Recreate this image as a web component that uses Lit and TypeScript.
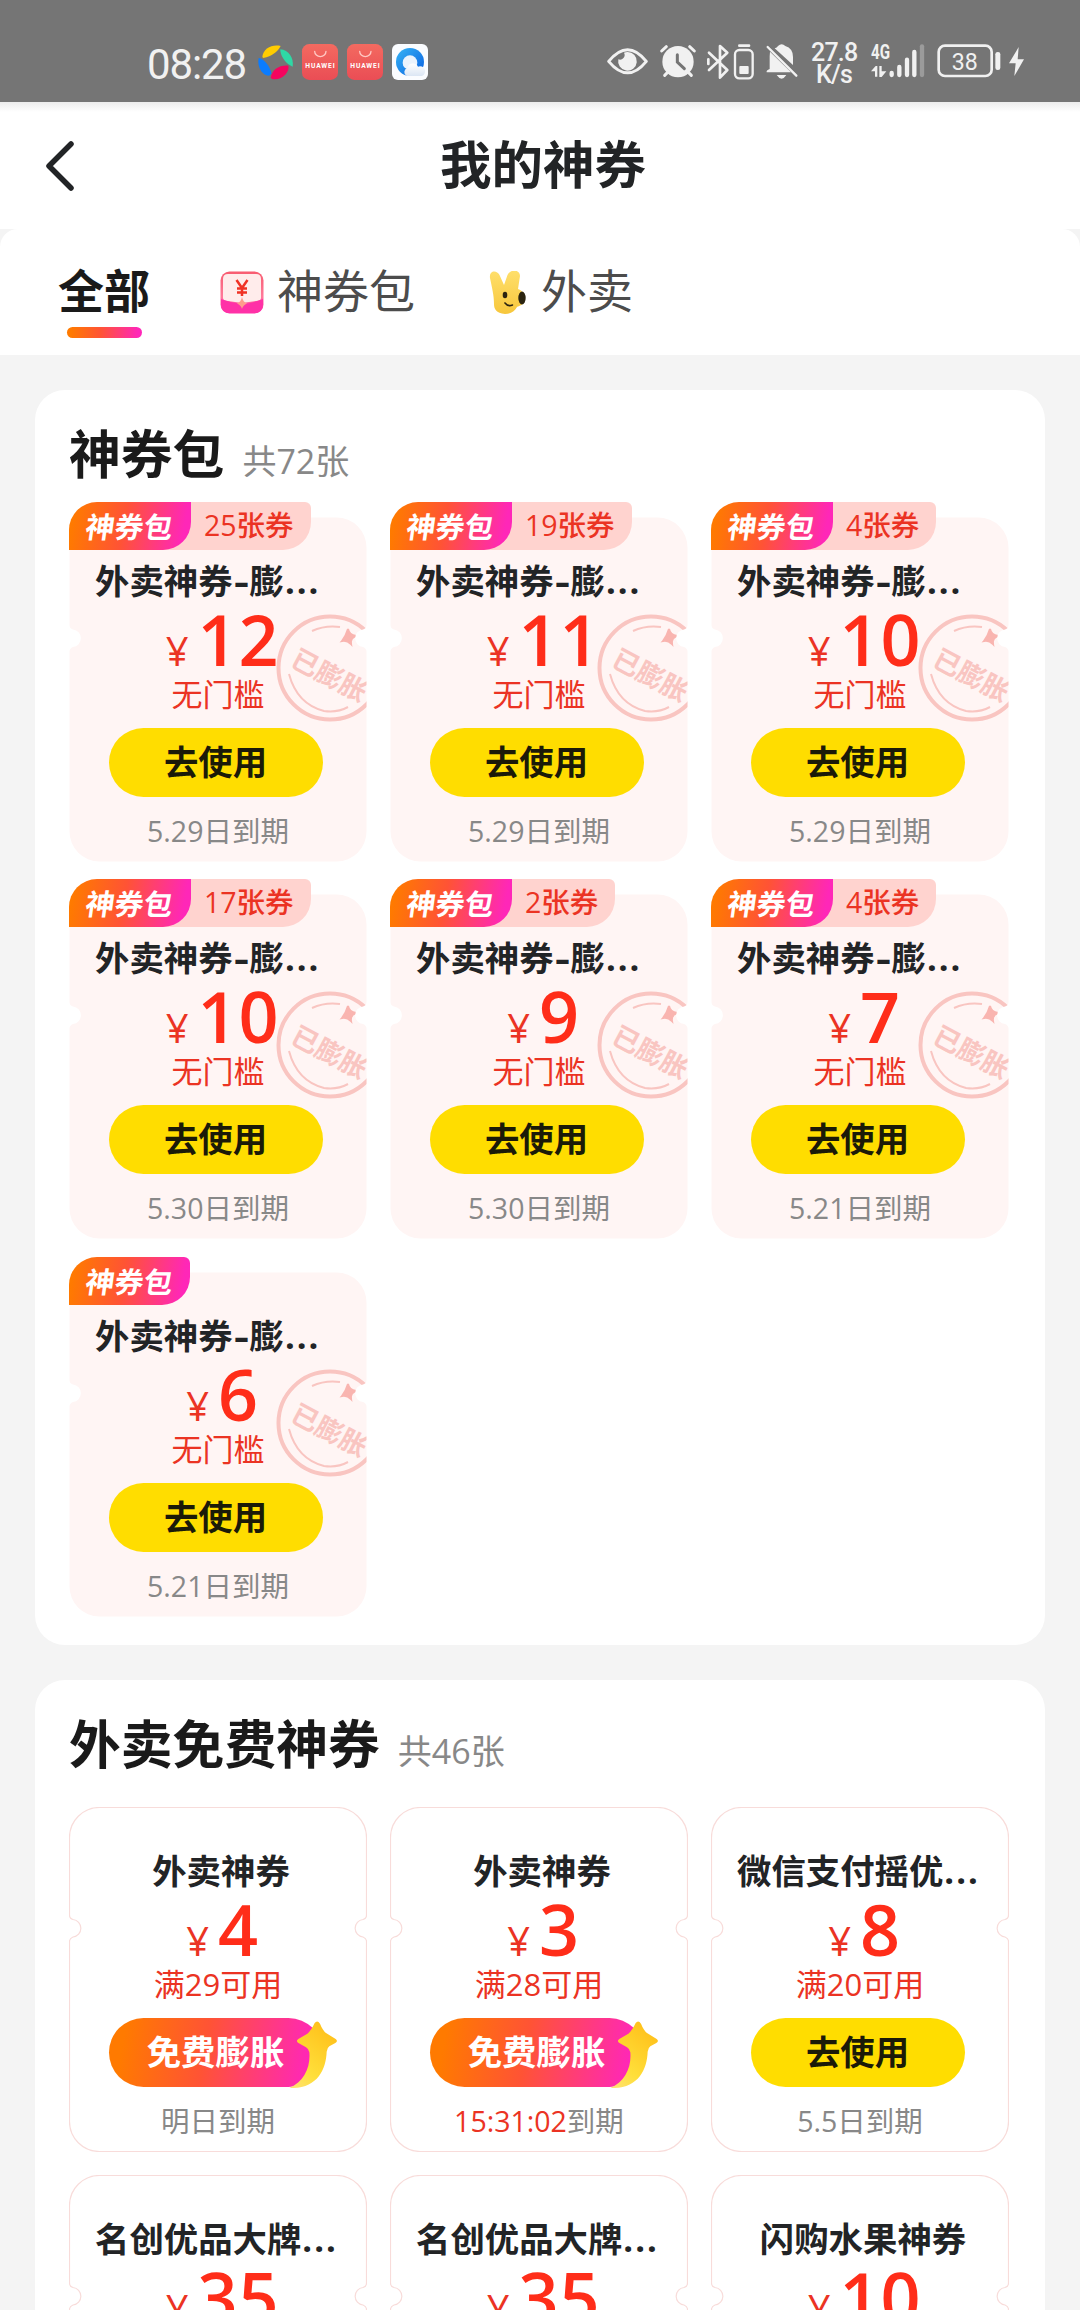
import { LitElement, html, svg, css, nothing } from "lit";
import { customElement, property } from "lit/decorators.js";

interface Coupon {
  title: string;
  price: string;
  condition?: string;
  action?: "use" | "boost";
  countdown?: string;
  expiry?: string;
  pack?: boolean;
  count?: string;
}

const pack = (price: string, day: string, count?: string): Coupon => ({
  title: "外卖神券-膨...",
  price,
  condition: "无门槛",
  action: "use",
  expiry: day + "日到期",
  pack: true,
  count,
});

const PACKS: Coupon[] = [
  pack("12", "5.29", "25张券"),
  pack("11", "5.29", "19张券"),
  pack("10", "5.29", "4张券"),
  pack("10", "5.30", "17张券"),
  pack("9", "5.30", "2张券"),
  pack("7", "5.21", "4张券"),
  pack("6", "5.21"),
];

const FREE: Coupon[] = [
  { title: "外卖神券", price: "4", condition: "满29可用", action: "boost", expiry: "明日到期" },
  { title: "外卖神券", price: "3", condition: "满28可用", action: "boost", countdown: "15:31:02", expiry: "到期" },
  { title: "微信支付摇优...", price: "8", condition: "满20可用", action: "use", expiry: "5.5日到期" },
  { title: "名创优品大牌...", price: "35" },
  { title: "名创优品大牌...", price: "35" },
  { title: "闪购水果神券", price: "10" },
];

const TICKET =
  "M30.5 .5H267.5A30 30 0 0 1 297.5 30.5V108Q297.5 111.5 294 112.5A8.8 8.8 0 0 0 294 130Q297.5 131.5 297.5 134.5V314.5A30 30 0 0 1 267.5 344.5H30.5A30 30 0 0 1 .5 314.5V134.5Q.5 131.5 4 130A8.8 8.8 0 0 0 4 112.5Q.5 111.5 .5 108V30.5A30 30 0 0 1 30.5 .5Z";

@customElement("status-bar")
class StatusBar extends LitElement {
  static styles = css`
    :host {
      display: flex;
      height: 102px;
      box-sizing: border-box;
      background: #757575;
      color: #f1f1f1;
      font-family: Roboto, "Noto Sans CJK SC", sans-serif;
      padding: 42px 56px 0 147px;
      align-items: flex-start;
    }
    svg { display: block; flex: none; overflow: visible; }
    .time { font-size: 42px; line-height: 46px; width: 111px; letter-spacing: -1.1px; white-space: nowrap; }
    .apps { display: flex; gap: 9px; padding-top: 2px; }
    .system { display: flex; margin-left: auto; }
    .eye { margin: 5px 12px 0 0; }
    .alarm { margin: 2px 12px 0 0; }
    .bt { margin: 2px 5px 0 0; }
    .cell { margin: 2px 12px 0 0; }
    .bell { margin: 2px 14px 0 0; }
    .speed { width: 46px; margin-right: 14px; font-size: 25px; line-height: 22px; font-weight: 500; text-align: center; white-space: nowrap; letter-spacing: -0.8px; }
    .signal { margin: 2px 12px 0 0; }
    .battery { margin: 2px 8px 0 0; }
    .bolt { margin: 5px 0 0 0; }
    text { font-family: Roboto, sans-serif; }
  `;

  private bag() {
    return html`<svg width="36" height="36" viewBox="0 0 108 108">
      <defs><linearGradient id="r" x2="0" y2="1"><stop stop-color="#f36a60" /><stop offset="1" stop-color="#ea4d55" /></linearGradient></defs>
      <rect width="108" height="108" rx="22" fill="url(#r)" />
      <path d="M38 22a17 16 0 0 0 34 0" fill="none" stroke="#ffc7c2" stroke-width="4" stroke-linecap="round" />
      <text x="54" y="71" font-size="20" font-weight="700" fill="#fff" text-anchor="middle" textLength="88">HUAWEI</text>
    </svg>`;
  }

  render() {
    return html`
      <div class="time">08:28</div>
      <div class="apps">
        <svg width="35" height="36" viewBox="0 0 105 108">
          <path d="M13 39C15 14 42 0 68 6C58 24 42 37 16 42Z" fill="#fc0" />
          <path d="M67 16C92 18 108 42 104 68C86 60 70 42 67 20Z" fill="#2fd8a5" />
          <path d="M38 101C42 78 62 63 91 65C96 84 70 112 42 105Z" fill="#f5045e" />
          <path d="M2 42C16 44 36 64 40 88C36 100 20 96 10 82C2 70-1 56 2 42Z" fill="#0a7cff" />
        </svg>
        ${this.bag()} ${this.bag()}
        <svg width="36" height="36" viewBox="0 0 108 108">
          <defs>
            <linearGradient id="q" x2="1" y2="1"><stop stop-color="#35b4f5" /><stop offset="1" stop-color="#0a5fe0" /></linearGradient>
            <linearGradient id="c" x2="0" y2="1"><stop stop-color="#fff" /><stop offset="1" stop-color="#dbe6f4" /></linearGradient>
          </defs>
          <rect width="108" height="108" rx="18" fill="#fafcff" />
          <circle cx="54" cy="54" r="42" fill="url(#q)" />
          <circle cx="54" cy="56" r="22" fill="#eaf3fd" />
          <path d="M44 96a13 13 0 0 1 2-24a17 17 0 0 1 32-4a14 14 0 0 1 12 28Z" fill="url(#c)" />
        </svg>
      </div>
      <div class="system">
        <svg class="eye" width="41" height="28" viewBox="54 82 123 84">
          <path d="M59 125Q116 55 172 125Q116 194 59 125Z" fill="none" stroke="#f1f1f1" stroke-width="9" stroke-linejoin="round" />
          <path d="M116 97a28 28 0 1 1-28 22a14 14 0 0 0 17-20a28 28 0 0 1 11-2Z" fill="#f1f1f1" />
        </svg>
        <svg class="alarm" width="36" height="34" viewBox="212 74 108 102">
          <g stroke="#f1f1f1" stroke-width="9" stroke-linecap="round"><path d="M217 95l14-13M315 95l-14-13M226 168l14-14M306 168l-14-14" /></g>
          <circle cx="266" cy="127" r="47" fill="#f1f1f1" />
          <path d="M264 106v22l21 20" fill="none" stroke="#757575" stroke-width="9" stroke-linecap="round" />
        </svg>
        <svg class="bt" width="21" height="35" viewBox="354 72 63 105">
          <path d="M357 98L412 150L390 173V78L412 98L357 150M355 118v14" fill="none" stroke="#f1f1f1" stroke-width="8" stroke-linejoin="round" stroke-linecap="round" />
        </svg>
        <svg class="cell" width="20" height="36" viewBox="430 71 60 108">
          <path d="M446 76h29" stroke="#f1f1f1" stroke-width="8" stroke-linecap="round" />
          <rect x="433" y="89" width="53" height="85" rx="13" fill="none" stroke="#f1f1f1" stroke-width="7" />
          <rect x="446" y="137" width="28" height="24" rx="3" fill="#f1f1f1" />
        </svg>
        <svg class="bell" width="31" height="35" viewBox="525 73 93 105">
          <path d="M537 96L600 158H527Q525 152 536 148V110ZM551 86Q558 84 561 79Q572 69 583 79Q606 86 606 112V136ZM557 166H586Q572 188 557 166Z" fill="#f1f1f1" />
          <path d="M530 82L616 168" stroke="#f1f1f1" stroke-width="7" stroke-linecap="round" />
        </svg>
        <div class="speed">27.8<br />K/s</div>
        <svg class="signal" width="54" height="34" viewBox="842 74 162 102">
          <text x="842" y="119" font-size="60" font-weight="700" fill="#f1f1f1" textLength="57" lengthAdjust="spacingAndGlyphs">4G</text>
          <path d="M842 156L856 140H861V172H854V156ZM867 140H874V156H888L874 173H867Z" fill="#f1f1f1" />
          <g stroke="#f1f1f1" stroke-width="13" stroke-linecap="round"><path d="M904 161v6M927 143v24M950 121v46M972 98v69" /><path d="M995 81v86" stroke="#9b9b9b" /></g>
        </svg>
        <svg class="battery" width="64" height="34" viewBox="1040 74 192 102">
          <rect x="1045" y="79" width="159" height="91" rx="19" fill="none" stroke="#f1f1f1" stroke-width="8" />
          <rect x="1215" y="98" width="15" height="54" rx="7" fill="#f1f1f1" />
          <text x="1123" y="151" font-size="72" fill="#f1f1f1" text-anchor="middle" textLength="78" lengthAdjust="spacingAndGlyphs">38</text>
        </svg>
        <svg class="bolt" width="15" height="29" viewBox="1257 82 45 87">
          <path d="M1286 82L1257 131H1277L1273 169L1302 119H1283Z" fill="#f1f1f1" />
        </svg>
      </div>
    `;
  }
}

@customElement("coupon-card")
class CouponCard extends LitElement {
  @property({ attribute: false }) coupon!: Coupon;

  static styles = css`
    :host { display: block; position: relative; width: 298px; height: 345px; font-family: "Open Sans", "Noto Sans CJK SC", sans-serif; }
    .ticket { position: absolute; left: 0; top: 0; display: block; }
    .stamp { font-family: "Noto Sans CJK SC", sans-serif; font-size: 27px; font-weight: 700; fill: #f9c5c1; }
    .tags { position: absolute; left: 0; top: -15px; display: flex; height: 48px; line-height: 47px; white-space: nowrap; }
    .tag { position: relative; z-index: 1; width: 121px; box-sizing: border-box; padding-left: 17px; line-height: 46px; border-radius: 28px 6px 28px 0; background: linear-gradient(100deg, #ff7a00 5%, #ff5335 45%, #ff27b8 92%); color: #fff; font-family: "Noto Sans CJK SC", sans-serif; font-size: 29px; font-weight: 700; }
    .tag.joined { border-top-right-radius: 0; width: 122px; }
    .skew { display: inline-block; transform: skewX(-8deg); }
    .count { margin-left: -30px; padding: 0 17px 0 43px; border-radius: 0 6px 28px 0; background: #ffd3cf; color: #eb3323; font-size: 28.5px; font-weight: 500; }
    .body { position: relative; display: flex; flex-direction: column; align-items: center; padding-top: 44px; white-space: nowrap; }
    .title { width: 248px; box-sizing: border-box; height: 40px; line-height: 39px; font-size: 34.4px; font-weight: 700; color: #222426; text-align: center; padding-left: 6px; }
    .title.cut { text-align: left; padding-left: 1px; }
    .dots { letter-spacing: 2px; margin-left: 1px; }
    .dash { display: inline-block; width: 17px; text-align: center; transform: scaleX(1.35); }
    .price { display: flex; height: 76px; line-height: 76px; align-items: baseline; gap: 9px; margin-left: 9px; color: #ff2d19; font-weight: 650; font-size: 70px; }
    .amount { letter-spacing: 0.8px; }
    .yen { font-size: 40px; font-weight: 400; color: #eb3323; }
    .condition { height: 34px; line-height: 34px; font-size: 31px; color: #eb3323; }
    .button { position: relative; width: 214px; height: 69px; line-height: 68px; margin: 17px 5px 0 0; border-radius: 35px; background: #fd0; color: #1b1a08; text-align: center; font-size: 34.4px; font-weight: 700; }
    .boost { background: linear-gradient(100deg, #ff7a00 8%, #ff5335 45%, #ff27b8 92%); color: #fff; }
    .arrow { position: absolute; left: 180px; top: 3px; }
    .expiry { height: 40px; line-height: 40px; margin-top: 14px; font-size: 28.5px; color: #888; }
    .countdown { color: #eb3323; }
  `;

  private name(title: string) {
    const cut = title.endsWith("...");
    const [head, tail] = (cut ? title.slice(0, -3) : title).split("-");
    return html`<div class="title ${cut ? "cut" : ""}">${head}${tail ? html`<span class="dash">-</span>${tail}` : nothing}${cut ? html`<span class="dots">...</span>` : nothing}</div>`;
  }

  render() {
    const c = this.coupon;
    return html`
      <svg class="ticket" width="298" height="345" viewBox="0 0 298 345">
        ${c.pack
          ? svg`<clipPath id="t"><path d=${TICKET} /></clipPath>
            <path d=${TICKET} fill="#fff5f4" />
            <g clip-path="url(#t)" fill="none" stroke="#f9c5c1">
              <circle cx="261" cy="151" r="51.5" stroke-width="4" />
              <path d="M243 114Q256 108 271 110" stroke-width="2" />
              <path d="M220 157Q228 187 255 194Q268 196 279 190" stroke-width="2" />
              <path d="M279 112Q280 118 287 119Q281 121 282 127Q278 123 273 124Q277 119 279 112Z" fill="#f9b5b0" stroke="#f9b5b0" stroke-width="2" />
              <text class="stamp" stroke="none" transform="translate(220 148) rotate(28)">已膨胀</text>
            </g>`
          : svg`<path d=${TICKET} fill="#fff" stroke="#f8dcda" stroke-width="1.2" />`}
      </svg>
      ${c.pack
        ? html`<div class="tags">
            <div class="tag ${c.count ? "joined" : ""}"><span class="skew">神券包</span></div>
            ${c.count ? html`<div class="count">${c.count}</div>` : nothing}
          </div>`
        : nothing}
      <div class="body">
        ${this.name(c.title)}
        <div class="price"><span class="yen">¥</span><span class="amount">${c.price}</span></div>
        ${c.condition ? html`<div class="condition">${c.condition}</div>` : nothing}
        ${c.action === "use" ? html`<div class="button">去使用</div>` : nothing}
        ${c.action === "boost"
          ? html`<div class="button boost">免费膨胀
              <svg class="arrow" width="48" height="67" viewBox="717 962 144 201">
                <defs><linearGradient id="y" x1="0" y1="1" x2=".6" y2="0"><stop stop-color="#ffe27a" /><stop offset=".35" stop-color="#ffdf3a" /><stop offset="1" stop-color="#ffc21c" /></linearGradient></defs>
                <path d="M794 968Q802 958 810 970Q818 990 828 998L857 1016Q865 1022 856 1028L838 1038Q831 1043 830 1054C828 1110 800 1166 718 1163C762 1145 782 1100 778 1056Q777 1046 768 1041L744 1027Q737 1022 745 1016L772 1000Q784 990 794 968Z" fill="url(#y)" />
              </svg>
            </div>`
          : nothing}
        ${c.expiry ? html`<div class="expiry">${c.countdown ? html`<span class="countdown">${c.countdown}</span>` : nothing}${c.expiry}</div>` : nothing}
      </div>
    `;
  }
}

@customElement("app-root")
class AppRoot extends LitElement {
  static styles = css`
    :host { display: block; height: 2310px; overflow: hidden; background: #f4f4f4; font-family: "Open Sans", "Noto Sans CJK SC", sans-serif; color: #1a1a1a; }
    .header { display: grid; grid-template-columns: 120px 1fr 120px; align-items: center; height: 127px; box-sizing: border-box; background: linear-gradient(#ececec, #fff 10px); }
    .back { margin-left: 45px; display: block; }
    .heading { text-align: center; font-size: 51.5px; line-height: 60px; font-weight: 700; color: #222426; margin: -3px 0 0 6px; }
    .tabs { display: flex; height: 126px; box-sizing: border-box; padding: 35px 0 0 58px; background: #fff; border-radius: 18px 18px 0 0; font-size: 46px; line-height: 52px; color: #4c4c4c; white-space: nowrap; }
    .tab { display: flex; align-items: flex-start; }
    .tab svg { display: block; margin-top: 7px; }
    .all { flex-direction: column; align-items: center; width: 92px; gap: 11px; font-weight: 700; color: #1a1a1a; margin-right: 70px; }
    .line { width: 75px; height: 11px; border-radius: 6px; background: linear-gradient(90deg, #ff7a00 5%, #ff5335 45%, #ff27b8 95%); }
    .packs { gap: 13px; margin-right: 74px; }
    .food { gap: 14px; }
    .section { width: 1010px; box-sizing: border-box; margin: 35px auto 0; padding: 0 34px 28.4px; border-radius: 30px; background: #fff; }
    .top { display: flex; height: 127px; box-sizing: border-box; padding-top: 29px; align-items: baseline; line-height: 70px; gap: 18px; }
    .name { font-size: 51.8px; font-weight: 700; }
    .total { font-size: 34px; color: #888; }
    .grid { display: grid; grid-template-columns: repeat(3, 298px); column-gap: 23px; row-gap: 23px; }
    .grid.tagged { row-gap: 32.3px; }
  `;

  private section(name: string, total: string, items: Coupon[], tagged: boolean) {
    return html`<div class="section">
      <div class="top"><div class="name">${name}</div><div class="total">${total}</div></div>
      <div class="grid ${tagged ? "tagged" : ""}">${items.map((c) => html`<coupon-card .coupon=${c}></coupon-card>`)}</div>
    </div>`;
  }

  render() {
    return html`
      <status-bar></status-bar>
      <div class="header">
        <svg class="back" width="30" height="52" viewBox="0 0 30 52"><path d="M26 4L4 26L26 48" fill="none" stroke="#222426" stroke-width="5.500" stroke-linecap="round" stroke-linejoin="round" /></svg>
        <div class="heading">我的神券</div>
      </div>
      <div class="tabs">
        <div class="tab all">全部<div class="line"></div></div>
        <div class="tab packs">
          <svg width="44" height="43" viewBox="0 0 44 43">
            <defs><linearGradient id="p" x2="0" y2="1"><stop stop-color="#f85c70" /><stop offset=".6" stop-color="#ff7a9a" /><stop offset="1" stop-color="#ff2fa8" /></linearGradient></defs>
            <rect x=".5" y=".5" width="43" height="42" rx="9" fill="url(#p)" />
            <path d="M3 8Q3 3 8 3H36Q41 3 41 8V27Q41 30 36 30L22 32L8 30Q3 30 3 27Z" fill="#ffeceb" />
            <path d="M1 28Q11 32 22 33Q33 32 43 28V33Q43 42 34 42H10Q1 42 1 33Z" fill="#ff31a7" />
            <path d="M22 26Q23 31 27 32.500Q23 34 22 38Q21 34 17 32.500Q21 31 22 26Z" fill="#ff9d8c" />
            <path d="M16.500 9L22 17L27.500 9M22 17V25M17 17.500H27M17 21.500H27" fill="none" stroke="#f03225" stroke-width="2.500" />
          </svg>神券包
        </div>
        <div class="tab food">
          <svg width="38" height="43" viewBox="0 0 38 43">
            <defs><linearGradient id="b" x2="0" y2="1"><stop stop-color="#ffdf6b" /><stop offset="1" stop-color="#f7c73c" /></linearGradient></defs>
            <path d="M1 7C0-1 8-1 10.500 4L15 14L18.500 4C21-2 31-2 31 5L29 18C34 20 36 24 36 28C35 34 30 35 28 36C26 40 22 43 16 43C7 42 5 38 5 33C5 24 3 17 1 7Z" fill="url(#b)" />
            <ellipse cx="33" cy="27" rx="3.700" ry="6.500" fill="#2b2410" />
            <ellipse cx="16" cy="24" rx="2.300" ry="3.300" fill="#2b2410" />
            <path d="M16 32Q19 36 23.500 34" fill="none" stroke="#2b2410" stroke-width="1.600" stroke-linecap="round" />
          </svg>外卖
        </div>
      </div>
      ${this.section("神券包", "共72张", PACKS, true)} ${this.section("外卖免费神券", "共46张", FREE, false)}
    `;
  }
}
